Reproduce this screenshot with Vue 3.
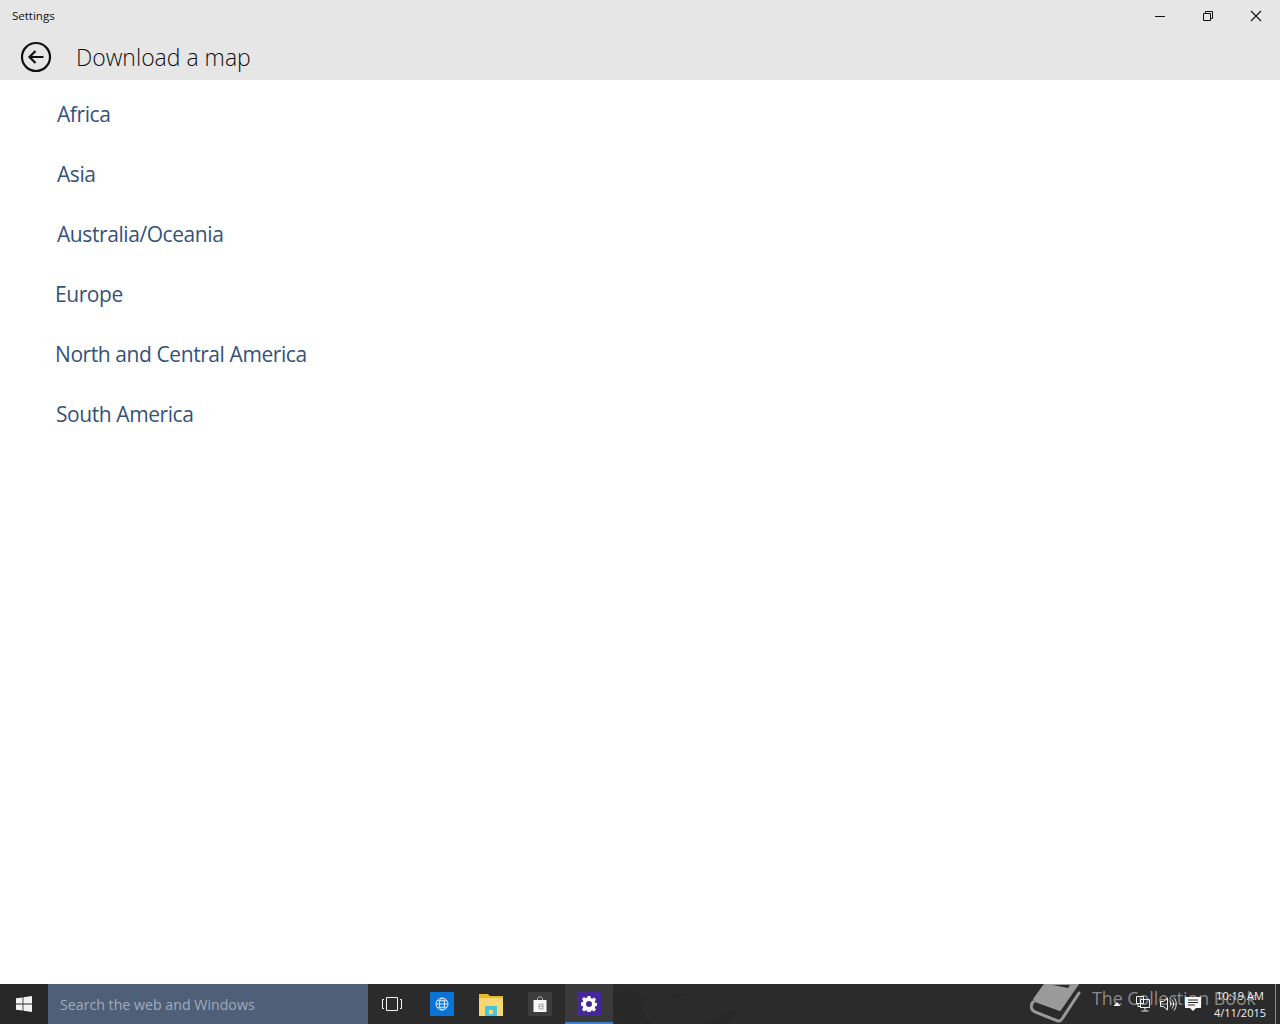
<template>
  <div class="window">
    <header class="header">
      <div class="titlebar">
        <span class="app-name">Settings</span>
        <div class="controls">
          <button class="ctl" aria-label="minimize">
            <svg width="12" height="12" viewBox="0 0 12 12"><path d="M1 6.500h10" stroke="#111" fill="none" /></svg>
          </button>
          <button class="ctl" aria-label="restore">
            <svg width="12" height="12" viewBox="0 0 12 12"><path d="M1.500 3.500h7v7h-7zM3.500 3.500v-2h7v7h-2" stroke="#111" fill="none" /></svg>
          </button>
          <button class="ctl" aria-label="close">
            <svg width="12" height="12" viewBox="0 0 12 12"><path d="M1 1l10 10M11 1L1 11" stroke="#111" stroke-width="1.100" fill="none" /></svg>
          </button>
        </div>
      </div>
      <div class="pagebar">
        <svg class="back" width="32" height="32" viewBox="0 0 32 32">
          <circle cx="16" cy="16" r="14" stroke="#111" stroke-width="2.200" fill="none" />
          <path d="M9.500 16h14M15.500 10l-6 6 6 6" stroke="#111" stroke-width="2.200" fill="none" />
        </svg>
        <h1 class="page-title">Download a map</h1>
      </div>
    </header>

    <main class="regions">
      <a v-for="r in regions" :key="r.name" class="region" :style="{ marginLeft: r.shift + 'px' }">{{ r.name }}</a>
    </main>

    <footer class="taskbar">
      <svg class="wallpaper-grain" width="150" height="40" viewBox="0 0 150 40">
        <path d="M0 8l18-4 16 10-6 12 10 14H6L0 30z" fill="#282828" />
        <path d="M56 11l18-2-10 5zM92 40l26-14 6 3-12 11z" fill="#272727" />
      </svg>
      <div class="start">
        <svg width="16" height="16" viewBox="0 0 16 16" fill="#f2f2f2">
          <path d="M0 2.300l6.600-.9v6.200H0zM7.400 1.300L16 0v7.600H7.400zM0 8.400h6.600v6.200L0 13.700zM7.400 8.400H16V16l-8.600-1.300z" />
        </svg>
      </div>
      <div class="search">Search the web and Windows</div>
      <div class="taskview">
        <svg width="22" height="16" viewBox="0 0 22 16" fill="none" stroke="#f2f2f2">
          <path d="M5.500 1.500h11v13h-11zM3 3.500H1.500v9H3M19 3.500h1.500v9H19" />
        </svg>
      </div>
      <div class="tile">
        <span class="app-icon blue">
          <svg width="14" height="14" viewBox="0 0 14 14" fill="none" stroke="#dcecff">
            <circle cx="7" cy="7" r="6" />
            <ellipse cx="7" cy="7" rx="2.600" ry="6" />
            <path d="M1 7h12M2 3.800h10M2 10.200h10" />
          </svg>
        </span>
      </div>
      <div class="tile">
        <svg width="24" height="24" viewBox="0 0 24 24">
          <path d="M0 2h9l2 2h13v3H0z" fill="#e8b92e" />
          <path d="M0 6h24v18H0z" fill="#f7d774" />
          <path d="M6 14h12v10H6z" fill="#4bc3d8" />
          <path d="M10 18h4v4h-4z" fill="#f7d774" />
        </svg>
      </div>
      <div class="tile">
        <span class="app-icon grey">
          <svg width="16" height="18" viewBox="0 0 16 18">
            <path d="M5.500 5V3.500c0-2 5-2 5 0V5" fill="none" stroke="#b5b5b5" />
            <path d="M1.500 5h13v12h-13z" fill="#f8f8f8" />
            <path d="M7 9.500l4-.7v5.400l-4-.7zM7 11.400h4" fill="none" stroke="#a5a5a5" />
          </svg>
        </span>
      </div>
      <div class="tile active">
        <span class="app-icon purple">
          <svg width="16" height="16" viewBox="0 0 16 16">
            <path fill="#fff" fill-rule="evenodd" d="M6.600 0h2.800l.4 2.200 1.300.6 1.900-1.300 2 2-1.300 1.900.6 1.300 2.200.4v2.800l-2.200.4-.6 1.300 1.300 1.900-2 2-1.900-1.300-1.300.6-.4 2.200H6.600l-.4-2.200-1.300-.6-1.900 1.300-2-2 1.300-1.900-.6-1.300L-.5 9.400V6.600l2.200-.4.6-1.300L1 3l2-2 1.900 1.300 1.300-.6zM8 5a3 3 0 100 6 3 3 0 000-6z" />
          </svg>
        </span>
      </div>

      <div class="wallpaper-mark">
        <svg width="52" height="40" viewBox="0 0 52 40">
          <path d="M15 0h33L30 26 5 17c-1-1-1-2 0-3z" fill="#9a9a9a" stroke="#9a9a9a" stroke-linejoin="round" stroke-width="2" />
          <path d="M23 1l15 3 2-3z" fill="#2b2b2b" />
          <path d="M3 18c-3 4-2 8 2 10l23 9c2 .5 3-.5 4-2L49 9" fill="none" stroke="#9a9a9a" stroke-width="3" stroke-linecap="round" />
        </svg>
        <span>The Collection Book</span>
      </div>

      <div class="tray">
        <svg class="chevron" width="8" height="6" viewBox="0 0 8 6"><path d="M4 1l3.500 4H.5z" fill="#f2f2f2" /></svg>
        <svg width="16" height="18" viewBox="0 0 16 18" fill="none" stroke="#f2f2f2">
          <path d="M1.500 1.500h7v7h-7zM5.500 4.500h9v8h-9zM10 12.500v3M6.500 16h7" />
          <path d="M3 8.500v3h2" />
        </svg>
        <svg width="18" height="16" viewBox="0 0 18 16" fill="none" stroke="#f2f2f2">
          <path d="M1.500 5.500h3l4-3.500v12l-4-3.500h-3zM11 5.500c1 1.500 1 3.500 0 5M13 3.500c2 3 2 6 0 9M15 1.500c3 4 3 9 0 13" />
        </svg>
        <svg width="16" height="16" viewBox="0 0 16 16">
          <path d="M0 1h16v11h-5l-3 3-3-3H0z" fill="#f5f5f5" />
          <path d="M3 4h10M3 6.500h10M3 9h7" stroke="#2b2b2b" />
        </svg>
        <div class="clock">
          <span>10:19 AM</span>
          <span>4/11/2015</span>
        </div>
        <div class="show-desktop"></div>
      </div>
    </footer>
  </div>
</template>

<script setup>
// left edges differ by a pixel or two in the original list
const regions = [
  { name: 'Africa', shift: 0 },
  { name: 'Asia', shift: 0 },
  { name: 'Australia/Oceania', shift: 0 },
  { name: 'Europe', shift: -2 },
  { name: 'North and Central America', shift: -2 },
  { name: 'South America', shift: -1 },
]
</script>

<style>
html,
body {
  margin: 0;
  background: #fff;
}
</style>

<style scoped>
.window {
  height: 1024px;
  display: flex;
  flex-direction: column;
  font-family: "Open Sans", "Noto Sans", sans-serif;
  overflow: hidden;
}

.header {
  background: #e6e6e6;
  height: 80px;
  flex: none;
  color: #111;
}

.titlebar {
  height: 32px;
  display: flex;
  justify-content: space-between;
  align-items: center;
}

.app-name {
  font-size: 11.500px;
  padding-left: 12px;
  margin-top: -1px;
}

.controls {
  display: flex;
}

.ctl {
  width: 48px;
  height: 32px;
  border: none;
  background: none;
  padding: 0;
  display: flex;
  align-items: center;
  justify-content: center;
}

.pagebar {
  height: 48px;
  display: flex;
  align-items: center;
  padding-left: 20px;
  gap: 24px;
}

.back {
  margin-top: 2px;
}

.page-title {
  margin: 2px 0 0;
  font-size: 23px;
  font-weight: 300;
  letter-spacing: 0;
}

.regions {
  flex: 1;
  display: flex;
  flex-direction: column;
  padding: 4px 0 0 57px;
}

.region {
  height: 60px;
  line-height: 60px;
  font-size: 21px;
  letter-spacing: -0.42px;
  color: #34527a;
}

.taskbar {
  position: relative;
  height: 40px;
  flex: none;
  background: #2b2b2b;
  display: flex;
  align-items: center;
}

.wallpaper-grain {
  position: absolute;
  left: 613px;
  top: 0;
}

.start {
  width: 48px;
  height: 40px;
  background: #272727;
  display: flex;
  align-items: center;
  justify-content: center;
}

.search {
  width: 308px;
  height: 39px;
  padding: 1px 0 0 12px;
  background: #4f5f77;
  color: #a0abbb;
  font-size: 14.200px;
  line-height: 40px;
}

.taskview {
  width: 47px;
  height: 40px;
  padding-right: 2px;
  display: flex;
  align-items: center;
  justify-content: center;
}

.tile {
  width: 48px;
  height: 40px;
  margin-left: 1px;
  display: flex;
  align-items: center;
  justify-content: center;
}

.app-icon {
  width: 24px;
  height: 24px;
  display: flex;
  align-items: center;
  justify-content: center;
}

.blue {
  background: #0a74d6;
}

.grey {
  background: #3d3d3d;
}

.purple {
  background: #47289a;
}

.active {
  background: #3a3a3a;
  box-shadow: inset 0 -2px 0 #3f7fc4;
}

.wallpaper-mark {
  position: absolute;
  left: 1030px;
  top: 0;
  height: 40px;
  display: flex;
  gap: 10px;
  color: #8a8a8a;
  font-size: 17.800px;
  line-height: 28px;
  white-space: nowrap;
}

.tray {
  position: absolute;
  right: 0;
  top: 0;
  height: 40px;
  display: flex;
  align-items: center;
  gap: 8px;
  color: #f2f2f2;
}

.chevron {
  margin-right: 6px;
}

.clock {
  width: 62px;
  display: flex;
  flex-direction: column;
  align-items: center;
  font-size: 11px;
  line-height: 17px;
}

.show-desktop {
  width: 4px;
  height: 40px;
  margin-left: -4px;
  border-left: 1px solid #8a8a8a;
}
</style>
